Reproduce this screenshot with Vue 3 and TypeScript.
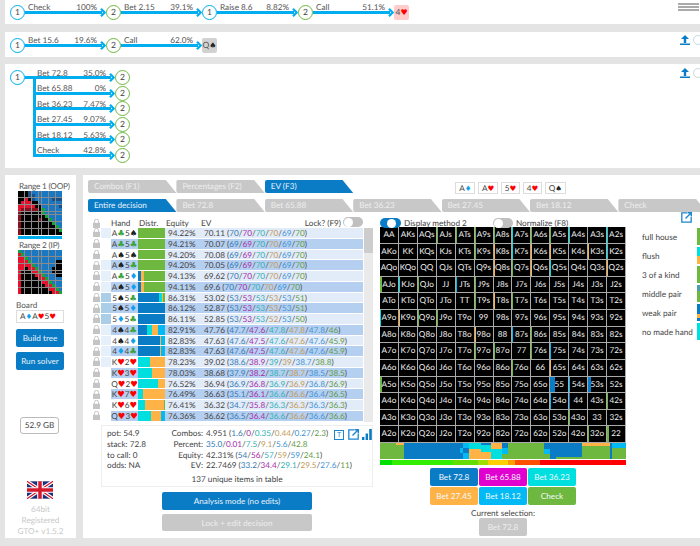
<script setup lang="ts">
interface Seg { w: number; c: string }

const D = "#0a7cc5"
const C = "#00dfe0"
const O = "#ffb347"
const G = "#6fb83f"
const L = "#00b9f5"
const M = "#e000d0"

const ranks = "AKQJT98765432".split("")

const parseCards = (str: string) => {
	const out: { r: string; s: string; k: string }[] = []
	const glyphs: Record<string, string> = { c: "♣", s: "♠", d: "♦", h: "♥" }
	for (let i = 0; i < str.length; i += 2) {
		out.push({ r: str[i], s: glyphs[str[i + 1]], k: str[i + 1] })
	}
	return out
}

const line1 = [
	{ label: "Check", pct: "100%", node: 1 },
	{ label: "Bet 2.15", pct: "39.1%", node: 2 },
	{ label: "Raise 8.6", pct: "8.82%", node: 1 },
	{ label: "Call", pct: "51.1%", node: 2 },
]
const line2 = [
	{ label: "Bet 15.6", pct: "19.6%", node: 1 },
	{ label: "Call", pct: "62.0%", node: 2 },
]
const branches = [
	{ label: "Bet 72.8", pct: "35.0%" },
	{ label: "Bet 65.88", pct: "0%" },
	{ label: "Bet 36.23", pct: "7.47%" },
	{ label: "Bet 27.45", pct: "9.07%" },
	{ label: "Bet 18.12", pct: "5.63%" },
	{ label: "Check", pct: "42.8%" },
]

const paint: Record<string, string> = { k: "#000", b: "#1a78c2", n: "#1c4f86", r: "#e8112d", d: "#8a1020", g: "#12a538" }
const range1 = [
	"kkknbbbbbbbbb",
	"kkknnbbbbbbbb",
	"kkrknbbbbbnnn",
	"krrrkkbbbbbbb",
	"rrrrrkkbbbbbn",
	"rdddddkgbbbbb",
	"dkkkkkkgbbbbb",
	"dkkkkkkkgbbbb",
	"dkkkkkdkkgbbb",
	"dkkkkkkkkkgbb",
	"dkkkkkkkkkkgb",
	"dkkkkkkkkkkkg",
	"dkkkkkkkkkkkk",
].map((r) => r.split("").map((c) => paint[c]))
const range2 = [
	"gbbbbbbbbbbbb",
	"rgbbbbbbbbbbb",
	"rrgbbbbbbbbbb",
	"rrrgbbbbbbbkk",
	"rrrrgbbbbbbkk",
	"rrkrrgbbbbkkk",
	"rkkkrrgbbbkkk",
	"rkkkkrrgbbbkk",
	"rkkkkkrrgbbbb",
	"rkkkkkkrrgbbb",
	"rkkkkkkkrrgbb",
	"rkkkkkkkkrrgb",
	"rkkkkkkkkkrrg",
].map((r) => r.split("").map((c) => paint[c]))

const rows = [
	{ hand: "Ac5s", w: 1, eq: "94.22%", ev: "70.11", vals: "70/70/70/70/69/70", dist: [{ w: 100, c: G }] },
	{ hand: "Ac5c", w: 0, eq: "94.21%", ev: "70.07", vals: "69/69/70/70/69/70", dist: [{ w: 100, c: G }] },
	{ hand: "As5s", w: 0, eq: "94.20%", ev: "70.08", vals: "69/69/70/70/69/70", dist: [{ w: 100, c: G }] },
	{ hand: "As5c", w: 1, eq: "94.20%", ev: "70.05", vals: "69/69/70/70/69/70", dist: [{ w: 100, c: G }] },
	{ hand: "Ac5d", w: 1, eq: "94.13%", ev: "69.62", vals: "70/70/70/70/69/70", dist: [{ w: 10, c: D }, { w: 14, c: O }, { w: 76, c: G }] },
	{ hand: "As5d", w: 1, eq: "94.11%", ev: "69.6", vals: "70/70/70/70/69/70", dist: [{ w: 10, c: D }, { w: 14, c: O }, { w: 76, c: G }] },
	{ hand: "5s5c", w: 2, eq: "86.31%", ev: "53.02", vals: "53/53/53/53/53/51", dist: [{ w: 79, c: D }, { w: 10, c: C }, { w: 5, c: O }, { w: 6, c: G }] },
	{ hand: "5s5d", w: 2, eq: "86.12%", ev: "52.87", vals: "53/53/53/53/53/51", dist: [{ w: 100, c: D }] },
	{ hand: "5d5c", w: 2, eq: "86.11%", ev: "52.85", vals: "53/53/53/52/53/50", dist: [{ w: 100, c: D }] },
	{ hand: "4s4c", w: 1, eq: "82.91%", ev: "47.76", vals: "47.7/47.6/47.8/47.8/47.8/46", dist: [{ w: 33, c: D }, { w: 20, c: C }, { w: 20, c: O }, { w: 27, c: L }] },
	{ hand: "4s4d", w: 1, eq: "82.83%", ev: "47.63", vals: "47.6/47.5/47.6/47.6/47.6/45.9", dist: [{ w: 82, c: D }, { w: 4, c: O }, { w: 14, c: L }] },
	{ hand: "4d4c", w: 1, eq: "82.83%", ev: "47.63", vals: "47.6/47.5/47.6/47.6/47.6/45.9", dist: [{ w: 82, c: D }, { w: 4, c: O }, { w: 14, c: L }] },
	{ hand: "Kh2h", w: 1, eq: "78.23%", ev: "39.02", vals: "38.6/38.9/39/39/38.7/38.8", dist: [{ w: 45, c: C }, { w: 55, c: O }] },
	{ hand: "Kh3h", w: 0, eq: "78.03%", ev: "38.68", vals: "37.9/38.2/38.7/38.7/38.5/38.5", dist: [{ w: 50, c: C }, { w: 50, c: O }] },
	{ hand: "Qh2h", w: 0, eq: "76.52%", ev: "36.94", vals: "36.9/36.8/36.9/36.9/36.8/36.9", dist: [{ w: 73, c: C }, { w: 27, c: O }] },
	{ hand: "Kh7h", w: 0, eq: "76.49%", ev: "36.63", vals: "35.1/36.1/36.6/36.6/36.4/36.5", dist: [{ w: 20, c: C }, { w: 80, c: O }] },
	{ hand: "Kh6h", w: 0, eq: "76.41%", ev: "36.32", vals: "34.7/35.8/36.3/36.3/36.3/36.3", dist: [{ w: 25, c: C }, { w: 70, c: O }, { w: 5, c: G }] },
	{ hand: "Qh3h", w: 0, eq: "76.36%", ev: "36.62", vals: "36.5/36.4/36.6/36.6/36.6/36.6", dist: [{ w: 47, c: C }, { w: 40, c: O }, { w: 13, c: L }] },
] as { hand: string; w: number; eq: string; ev: string; vals: string; dist: Seg[] }[]

const stats = [
	{ left: "pot: 54.9", label: "Combos:", lead: "4.951 (", vals: "1.6/0/0.35/0.44/0.27/2.3", tail: ")" },
	{ left: "stack: 72.8", label: "Percent:", lead: "", vals: "35.0/0.01/7.5/9.1/5.6/42.8", tail: "" },
	{ left: "to call: 0", label: "Equity:", lead: "42.31% (", vals: "54/56/57/59/59/24.1", tail: ")" },
	{ left: "odds: NA", label: "EV:", lead: "22.7469 (", vals: "33.2/34.4/29.1/29.5/27.6/11", tail: ")" },
]

const marks: Record<string, [string, number]> = {
	AJs: [G, 1], ATs: [G, 1], A9s: [G, 1], A8s: [G, 1], A7s: [C, 1], A6s: [G, 1], A5s: [G, 1], A4s: [C, 1], A2s: [C, 1],
	K9s: [G, 1], K8s: [O, 1], K7s: [C, 1], K6s: [O, 1], K5s: [O, 1], K3s: [O, 1], K2s: [C, 1],
	Q8s: [O, 1], Q7s: [G, 1], Q6s: [O, 1], Q5s: [C, 1], Q2s: [O, 1],
	AJo: [G, 2], KJo: [C, 1], QJo: [G, 1], JTs: [L, 1], J9s: [G, 1], T9s: [G, 1], T8s: [O, 1], T7s: [G, 1], A9o: [C, 1], K9o: [O, 1], Q9o: [G, 1], J9o: [G, 1],
	"98o": [O, 1], "87s": [L, 1], "86s": [G, 1], "97o": [G, 1], "87o": [G, 1], "76o": [G, 1], "76s": [G, 1], "75s": [L, 1], "65s": [O, 1],
	A5o: [G, 2], "55": [D, 5], "54s": [L, 1], "53s": [D, 3], "54o": [L, 1], "44": [D, 1], "42s": [G, 1], "43o": [G, 1], "32o": [G, 1], "22": [G, 2],
}

const grid = ranks.flatMap((a, r) =>
	ranks.map((b, c) => {
		const name = r === c ? a + a : c > r ? a + b + "s" : b + a + "o"
		const mark = marks[name]
		return { name, markColor: mark ? mark[0] : "", markWidth: mark ? mark[1] : 0 }
	}),
)

// share of the strip: width then stacked colours
const strip: { w: number; stack: Seg[] }[] = [
	{ w: 8, stack: [{ w: 100, c: G }] },
	{ w: 4, stack: [{ w: 12, c: O }, { w: 88, c: G }] },
	{ w: 20, stack: [{ w: 100, c: D }] },
	{ w: 8, stack: [{ w: 100, c: D }] },
	{ w: 1.5, stack: [{ w: 30, c: D }, { w: 30, c: L }, { w: 40, c: D }] },
	{ w: 3, stack: [{ w: 30, c: L }, { w: 30, c: D }, { w: 40, c: L }] },
	{ w: 6, stack: [{ w: 35, c: C }, { w: 65, c: O }] },
	{ w: 5, stack: [{ w: 10, c: D }, { w: 45, c: C }, { w: 45, c: O }] },
	{ w: 5, stack: [{ w: 40, c: O }, { w: 60, c: C }] },
	{ w: 3, stack: [{ w: 30, c: D }, { w: 40, c: L }, { w: 30, c: G }] },
	{ w: 18, stack: [{ w: 100, c: G }] },
	{ w: 3, stack: [{ w: 40, c: D }, { w: 30, c: L }, { w: 30, c: G }] },
	{ w: 3, stack: [{ w: 100, c: D }] },
	{ w: 13, stack: [{ w: 85, c: D }, { w: 15, c: G }] },
	{ w: 14, stack: [{ w: 20, c: O }, { w: 80, c: G }] },
	{ w: 1, stack: [{ w: 100, c: D }] },
	{ w: 7, stack: [{ w: 30, c: L }, { w: 70, c: G }] },
]

const actions = [
	{ label: "Bet 72.8", c: D },
	{ label: "Bet 65.88", c: M },
	{ label: "Bet 36.23", c: C },
	{ label: "Bet 27.45", c: O },
	{ label: "Bet 18.12", c: L },
	{ label: "Check", c: G },
]

const legend = [
	{ name: "full house", bar: [{ w: 100, c: G }] },
	{ name: "flush", bar: [{ w: 50, c: C }, { w: 50, c: O }] },
	{ name: "3 of a kind", bar: [{ w: 100, c: G }] },
	{ name: "middle pair", bar: [{ w: 35, c: "#4a9fb0" }, { w: 65, c: G }] },
	{ name: "weak pair", bar: [{ w: 60, c: D }, { w: 20, c: O }, { w: 20, c: D }] },
	{ name: "no made hand", bar: [{ w: 100, c: C }] },
]

const topTabs = ["Combos (F1)", "Percentages (F2)", "EV (F3)"]
const subTabs = ["Entire decision", "Bet 72.8", "Bet 65.88", "Bet 36.23", "Bet 27.45", "Bet 18.12", "Check"]
</script>

<template>
	<div class="page">
		<div class="panel p1">
			<div class="tree-line">
				<template v-for="e in line1" :key="e.label">
					<span class="node" :class="'n' + e.node">{{ e.node }}</span>
					<div class="edge">
						<div class="edge-text"><span>{{ e.label }}</span><span>{{ e.pct }}</span></div>
						<div class="arrow"><i></i><svg width="6" height="9" viewBox="0 0 6 9"><path d="M1 .8 L4.6 4.5 L1 8.2" fill="none" stroke="#00aeef" stroke-width="2.2" /></svg></div>
					</div>
				</template>
				<span class="card-node red"><b>4</b><em class="suit-h">♥</em></span>
			</div>
			<div class="stripes"><i></i><i></i><i></i></div>
		</div>

		<div class="panel p2">
			<div class="tree-line">
				<template v-for="e in line2" :key="e.label">
					<span class="node" :class="'n' + e.node">{{ e.node }}</span>
					<div class="edge">
						<div class="edge-text"><span>{{ e.label }}</span><span>{{ e.pct }}</span></div>
						<div class="arrow"><i></i><svg width="6" height="9" viewBox="0 0 6 9"><path d="M1 .8 L4.6 4.5 L1 8.2" fill="none" stroke="#00aeef" stroke-width="2.2" /></svg></div>
					</div>
				</template>
				<span class="card-node grey"><b>Q</b><em class="suit-s">♠</em></span>
			</div>
			<div class="tools">
				<svg width="10" height="10" viewBox="0 0 10 10"><path d="M5 0 L9 4 H6.2 V8 H3.8 V4 H1 Z M0 8.6 H10 V10 H0 Z" fill="#0a7cc5" /></svg>
				<span class="ring"></span>
			</div>
		</div>

		<div class="panel p3">
			<div class="tree-split">
				<span class="node n1">1</span>
				<span class="stem"></span>
				<div class="branches">
					<span class="trunk"></span>
					<div v-for="b in branches" :key="b.label" class="branch">
						<div class="edge long">
							<div class="edge-text"><span>{{ b.label }}</span><span>{{ b.pct }}</span></div>
							<div class="arrow"><i></i><svg width="6" height="9" viewBox="0 0 6 9"><path d="M1 .8 L4.6 4.5 L1 8.2" fill="none" stroke="#00aeef" stroke-width="2.2" /></svg></div>
						</div>
						<span class="node n2">2</span>
					</div>
				</div>
			</div>
			<div class="tools">
				<svg width="10" height="10" viewBox="0 0 10 10"><path d="M5 0 L9 4 H6.2 V8 H3.8 V4 H1 Z M0 8.6 H10 V10 H0 Z" fill="#0a7cc5" /></svg>
				<span class="ring"></span>
			</div>
		</div>

		<div class="lower">
			<aside class="side">
				<div class="range-title">Range 1 (OOP)</div>
				<div class="range">
					<template v-for="(r, i) in range1" :key="i"><i v-for="(c, j) in r" :key="j" :style="{ background: c }"></i></template>
				</div>
				<div class="range-active"></div>
				<div class="range-title second">Range 2 (IP)</div>
				<div class="range">
					<template v-for="(r, i) in range2" :key="i"><i v-for="(c, j) in r" :key="j" :style="{ background: c }"></i></template>
				</div>
				<div class="board-title">Board</div>
				<div class="board-input">
					<template v-for="(c, i) in parseCards('AdAh5h')" :key="i">{{ c.r }}<em :class="'suit-' + c.k">{{ c.s }}</em></template>
				</div>
				<button class="btn side-btn first">Build tree</button>
				<button class="btn side-btn">Run solver</button>
				<div class="memory">52.9 GB</div>
				<svg class="flag" width="26" height="18" viewBox="0 0 60 40">
					<rect width="60" height="40" fill="#1b2f7a" />
					<path d="M0 0 L60 40 M60 0 L0 40" stroke="#fff" stroke-width="8" />
					<path d="M0 0 L60 40 M60 0 L0 40" stroke="#d3182b" stroke-width="3" />
					<path d="M30 0 V40 M0 20 H60" stroke="#fff" stroke-width="13" />
					<path d="M30 0 V40 M0 20 H60" stroke="#d3182b" stroke-width="8" />
				</svg>
				<div class="version">64bit<br />Registered<br />GTO+ v1.5.2</div>
			</aside>

			<main class="main">
				<div class="tabs top">
					<span v-for="(t, i) in topTabs" :key="t" class="tab" :class="{ on: i === 2 }">{{ t }}</span>
					<div class="board-cards">
						<span v-for="c in ['Ad', 'Ah', '5h', '4h', 'Qs']" :key="c" class="mini">{{ c[0] }}<em :class="'suit-' + c[1]">{{ parseCards(c)[0].s }}</em></span>
					</div>
				</div>
				<div class="tabs sub">
					<span v-for="(t, i) in subTabs" :key="t" class="tab" :class="{ on: i === 0 }">{{ t }}</span>
				</div>

				<div class="body">
					<section class="left">
						<div class="thead">
							<span class="c-lock"><svg width="7" height="9" viewBox="0 0 7 9"><path d="M1.4 4 V2.4 A2.1 2.1 0 0 1 5.6 2.4 V4" fill="none" stroke="#c4c4c4" stroke-width="1" /><rect y="3.8" width="7" height="5.2" fill="#c4c4c4" /></svg></span>
							<span class="c-weight"></span>
							<span class="c-hand">Hand</span>
							<span class="c-dist">Distr.</span>
							<span class="c-eq">Equity</span>
							<span class="c-ev">EV</span>
							<span class="lock-q">Lock? (F9)</span>
							<span class="switch off"><i></i></span>
						</div>
						<div class="table">
							<div class="tbody">
								<div v-for="(r, idx) in rows" :key="r.hand" class="row" :class="{ alt: idx % 2 === 1 }">
									<span class="c-lock"><svg width="7" height="9" viewBox="0 0 7 9"><path d="M1.4 4 V2.4 A2.1 2.1 0 0 1 5.6 2.4 V4" fill="none" stroke="#c4c4c4" stroke-width="1" /><rect y="3.8" width="7" height="5.2" fill="#c4c4c4" /></svg></span>
									<span class="c-weight" :class="'w' + r.w"></span>
									<span class="c-hand"><template v-for="(c, i) in parseCards(r.hand)" :key="i">{{ c.r }}<em :class="'suit-' + c.k">{{ c.s }}</em></template></span>
									<span class="c-dist"><i v-for="(s, i) in r.dist" :key="i" :style="{ width: s.w + '%', background: s.c }"></i></span>
									<span class="c-eq">{{ r.eq }}</span>
									<span class="c-ev">{{ r.ev }} (<template v-for="(v, i) in r.vals.split('/')" :key="i"><template v-if="i">/</template><span :class="'v' + i">{{ v }}</span></template>)</span>
								</div>
							</div>
							<div class="scroll"><i></i></div>
						</div>

						<div class="stats">
							<div class="stat-icons">
								<span class="icon-t">T</span>
								<svg width="11" height="11" viewBox="0 0 11 11"><path d="M6 .8 H.8 V10.2 H10.2 V5" fill="none" stroke="#1a86d0" stroke-width="1.3" /><path d="M4.5 6.5 L10 1 M6.5 .7 H10.3 V4.5" fill="none" stroke="#1a86d0" stroke-width="1.4" /></svg>
								<svg width="10" height="11" viewBox="0 0 10 11"><path d="M0 8 H2.4 V11 H0 Z M3.6 4.5 H6 V11 H3.6 Z M7.2 0 H9.8 V11 H7.2 Z" fill="#0a7cc5" /></svg>
							</div>
							<div class="stat-grid">
								<template v-for="s in stats" :key="s.label">
									<span>{{ s.left }}</span>
									<span class="stat-label">{{ s.label }}</span>
									<span>{{ s.lead }}<template v-for="(v, i) in s.vals.split('/')" :key="i"><template v-if="i">/</template><span :class="'v' + i">{{ v }}</span></template>{{ s.tail }}</span>
								</template>
							</div>
							<div class="unique">137 unique items in table</div>
						</div>

						<button class="btn wide">Analysis mode (no edits)</button>
						<button class="btn wide off">Lock + edit decision</button>
					</section>

					<section class="right">
						<div class="toggles">
							<span class="switch on"><i></i></span>
							<span class="toggle-text first">Display method 2</span>
							<span class="switch off"><i></i></span>
							<span class="toggle-text">Normalize (F8)</span>
							<svg class="popout" width="11" height="11" viewBox="0 0 11 11"><path d="M6 .8 H.8 V10.2 H10.2 V5" fill="none" stroke="#1a86d0" stroke-width="1.3" /><path d="M4.5 6.5 L10 1 M6.5 .7 H10.3 V4.5" fill="none" stroke="#1a86d0" stroke-width="1.4" /></svg>
						</div>
						<div class="grid-wrap">
							<div class="matrix-col">
								<div class="matrix">
									<div v-for="g in grid" :key="g.name" class="cell">
										<i v-if="g.markWidth" :style="{ width: g.markWidth + 'px', background: g.markColor }"></i>
										<span>{{ g.name }}</span>
									</div>
								</div>
								<div class="strip">
									<div v-for="(s, i) in strip" :key="i" class="strip-col" :style="{ flexGrow: s.w }">
										<i v-for="(p, j) in s.stack" :key="j" :style="{ height: p.w + '%', background: p.c }"></i>
									</div>
								</div>
								<div class="heat"></div>
								<div class="action-grid">
									<button v-for="a in actions" :key="a.label" class="btn action" :style="{ background: a.c }">{{ a.label }}</button>
								</div>
								<div class="current">Current selection:</div>
								<button class="btn action off selected">Bet 72.8</button>
							</div>
							<ul class="legend">
								<li v-for="l in legend" :key="l.name">
									<span>{{ l.name }}</span>
									<div class="legend-bar"><i v-for="(p, j) in l.bar" :key="j" :style="{ height: p.w + '%', background: p.c }"></i></div>
								</li>
							</ul>
						</div>
					</section>
				</div>
			</main>
		</div>
	</div>
</template>

<style>
html,
body {
	margin: 0;
	background: #e4e4e4;
}
</style>

<style scoped>
.page {
	width: 700px;
	height: 546px;
	overflow: hidden;
	background: #e4e4e4;
	padding-left: 5px;
	box-sizing: border-box;
	font-family: Lato, "DejaVu Sans", sans-serif;
	font-size: 8.2px;
	line-height: 10px;
	color: #555;
	text-rendering: geometricPrecision;
}

em {
	font-style: normal;
	font-family: "DejaVu Sans", sans-serif;
	font-size: 8.5px;
}
.suit-c { color: #3aa33a; }
.suit-s { color: #222; }
.suit-d { color: #12a0ee; }
.suit-h { color: #f00; }

/* hand tree */
.panel {
	background: #fff;
	width: 695px;
	display: flex;
	justify-content: space-between;
	align-items: flex-start;
	overflow: hidden;
	box-sizing: border-box;
	padding-left: 5px;
}
.p1 { height: 24px; padding-top: 4.5px; margin-bottom: 8px; }
.p2 { height: 25px; padding-top: 5.5px; margin-bottom: 7px; }
.p3 { height: 104px; padding-top: 6.25px; margin-bottom: 7px; }

.tree-line {
	display: flex;
	align-items: flex-start;
}
.node {
	flex: none;
	width: 15px;
	height: 15px;
	box-sizing: border-box;
	border: 1.6px solid #00aeef;
	border-radius: 50%;
	background: #fff;
	text-align: center;
	line-height: 12px;
	color: #444;
	font-size: 8.5px;
}
.node.n2 { border-color: #6fb83f; }
.edge {
	width: 81px;
	margin-top: -2.5px;
	flex: none;
}
.edge.long { width: 82px; }
.edge-text {
	display: flex;
	justify-content: space-between;
	padding: 0 9px 0 3px;
	height: 10px;
	white-space: nowrap;
}
.edge.long .edge-text { padding-left: 4px; }
.arrow {
	display: flex;
	align-items: center;
	height: 9px;
	margin-top: -4.5px;
}
.arrow i {
	flex: 1;
	height: 3px;
	background: #00aeef;
	margin-right: -2px;
}
.arrow svg { flex: none; }
.card-node {
	flex: none;
	width: 15px;
	height: 15px;
	border-radius: 2px;
	text-align: center;
	line-height: 15px;
	font-size: 8.5px;
	white-space: nowrap;
	overflow: hidden;
}
.card-node b { font-weight: 400; }
.card-node em { font-size: 8px; }
.card-node.red { background: #ffcccc; }
.card-node.grey { background: #d2d2d2; }

.stripes {
	width: 21px;
	display: flex;
	flex-direction: column;
	gap: 1px;
	margin: -1.5px 1px 0 0;
}
.stripes i {
	height: 2px;
	background: #aaa;
}
.tools {
	display: flex;
	align-items: center;
	gap: 3px;
	width: 20px;
	flex: none;
	margin: -2.5px 0 0 0;
}
.tools svg { flex: none; }
.ring {
	flex: none;
	width: 10px;
	height: 10px;
	box-sizing: border-box;
	border: 1px solid #c8d8e0;
	border-radius: 50%;
}

.tree-split {
	display: flex;
	align-items: flex-start;
}
.stem {
	flex: none;
	width: 8px;
	height: 3px;
	margin-top: 6px;
	background: #00aeef;
}
.branches {
	position: relative;
}
.trunk {
	position: absolute;
	left: 0;
	top: 6px;
	bottom: 6.5px;
	width: 3px;
	background: #00aeef;
}
.branch {
	display: flex;
	align-items: flex-start;
	height: 15.5px;
}

/* lower area */
.lower {
	display: flex;
	gap: 7px;
	height: 363px;
}
.side {
	flex: none;
	width: 71px;
	background: #fff;
	box-sizing: border-box;
	padding: 6px 0 0 11px;
	display: flex;
	flex-direction: column;
	white-space: nowrap;
}
.range-title {
	padding-left: 3px;
	height: 10px;
	letter-spacing: -.2px;
}
.range-title.second { margin-top: 1px; }
.range {
	margin-left: 2px;
	width: 44px;
	height: 44px;
	flex: none;
	display: grid;
	grid-template-columns: repeat(13, 1fr);
	grid-template-rows: repeat(13, 1fr);
	gap: .55px;
	background: #8a8a8a;
}
.range-active {
	flex: none;
	width: 44px;
	height: 3px;
	margin: 1px 0 0 2px;
	background: #00aeef;
}
.board-title {
	margin-top: 6px;
	height: 10px;
}
.board-input {
	width: 48px;
	height: 13px;
	box-sizing: border-box;
	border: 1px solid #ddd;
	padding-left: 3px;
	line-height: 11px;
	color: #444;
}
.board-input em { font-size: 7.5px; }
.btn {
	font: inherit;
	font-size: 8.2px;
	border: 0;
	border-radius: 2px;
	padding: 0;
	background: #0a7cc5;
	color: #e8f2fa;
	display: block;
	white-space: nowrap;
}
.btn.off {
	background: #c8c8c8;
	color: #eee;
}
.side-btn {
	flex: none;
	width: 48px;
	height: 18px;
	margin-top: 5px;
}
.side-btn.first { margin-top: 6px; }
.memory {
	margin: 47px 0 0 4px;
	width: 39px;
	height: 17px;
	box-sizing: border-box;
	border: 1px solid #bbb;
	border-radius: 3px;
	text-align: center;
	line-height: 15px;
	color: #444;
}
.flag {
	flex: none;
	margin: 47px 0 0 11px;
}
.version {
	margin: 5px 0 0 -11px;
	width: 71px;
	text-align: center;
	color: #c8c8c8;
	line-height: 11px;
}

/* main */
.main {
	flex: 1;
	min-width: 0;
	background: #fff;
	box-sizing: border-box;
	padding: 5px 0 0 5px;
	overflow: hidden;
}
.tabs {
	display: flex;
	height: 13px;
	white-space: nowrap;
	color: #eee;
}
.tabs.sub { margin-top: 6px; }
.tab {
	flex: none;
	width: 88.4px;
	box-sizing: border-box;
	background: #c8c8c8;
	padding-left: 6px;
	line-height: 13px;
	clip-path: polygon(0 0, 88% 0, 100% 100%, 0 100%);
	border-radius: 2px 0 0 2px;
}
.tab.on {
	background: #0a7cc5;
	color: #e8f2fa;
}
.board-cards {
	display: flex;
	gap: 2.5px;
	margin: 3px 0 0 102px;
	height: 10px;
}
.mini {
	padding: 0 3px;
	border: 1px solid #ddd;
	text-align: center;
	line-height: 10px;
	height: 10px;
	color: #444;
	margin-top: -1px;
}
.mini em { font-size: 7.5px; }

.body {
	display: flex;
	gap: 7px;
}
.left {
	flex: none;
	width: 285px;
}
.thead {
	display: flex;
	align-items: flex-end;
	height: 16px;
	color: #444;
}
.c-lock {
	flex: none;
	width: 13px;
	display: flex;
	padding-left: 5px;
	box-sizing: border-box;
}
.c-weight {
	flex: none;
	width: 10px;
	height: 100%;
}
.row .c-weight.w1 { background: #e6f0fa; }
.row .c-weight.w2 { background: #aacde8; }
.c-hand {
	flex: none;
	width: 27px;
	text-align: center;
	white-space: nowrap;
}
.thead .c-hand { text-align: left; }
.c-dist {
	flex: none;
	width: 27px;
	display: flex;
	height: 100%;
}
.thead .c-dist { align-items: flex-end; padding-left: 1px; box-sizing: border-box; }
.c-dist i { display: block; height: 100%; }
.c-eq {
	flex: none;
	width: 35px;
	padding-left: 3px;
	box-sizing: border-box;
}
.thead .c-eq { padding-left: 1px; }
.c-ev {
	flex: none;
	width: 163px;
	padding-left: 4px;
	box-sizing: border-box;
	white-space: nowrap;
}
.thead .c-ev { width: auto; padding-left: 1px; }
.lock-q { margin-left: auto; margin-right: 2px; }
.thead .switch { margin: 0 10px 1px 0; }

.switch {
	flex: none;
	position: relative;
	display: block;
	width: 20px;
	height: 10px;
	border-radius: 5px;
	background: #c0c0c0;
}
.switch i {
	position: absolute;
	top: .5px;
	left: .5px;
	width: 9px;
	height: 9px;
	border-radius: 50%;
	background: #fff;
}
.switch.on { background: #0a7cc5; width: 21px; }
.switch.on i { left: 7px; }

.table {
	display: flex;
	height: 194px;
	overflow: hidden;
}
.tbody { flex: none; width: 275px; }
.row {
	display: flex;
	align-items: center;
	height: 10.76px;
	box-sizing: border-box;
	border-bottom: .75px solid #fff;
	color: #444;
}
.row .c-hand { height: 100%; background: #fff; }
.row .c-eq,
.row .c-ev {
	height: 100%;
	background: #e2ebf8;
}
.row.alt .c-hand,
.row.alt .c-eq,
.row.alt .c-ev {
	background: #b5cff0;
}
.row .c-hand em { font-size: 8.5px; }
.v0 { color: #2f79b5; }
.v1 { color: #a52aa8; }
.v2 { color: #2fb0b5; }
.v3 { color: #c29a55; }
.v4 { color: #3a94d4; }
.v5 { color: #5f9a45; }
.scroll {
	flex: none;
	width: 9px;
	margin-left: 1px;
	background: #eaeaea;
}
.scroll i {
	display: block;
	height: 25px;
	background: #cdcdcd;
}

.stats {
	margin: 3px 0 0 13px;
	width: 272px;
	height: 62px;
	box-sizing: border-box;
	border: 1px solid #eee;
	padding: 2px 0 0 5px;
	position: relative;
	color: #444;
}
.stat-icons {
	position: absolute;
	right: 0;
	top: 3px;
	display: flex;
	align-items: center;
	gap: 3px;
}
.icon-t {
	width: 10px;
	height: 10px;
	box-sizing: border-box;
	border: 1px solid #1a86d0;
	color: #1a86d0;
	font-size: 7px;
	line-height: 8px;
	text-align: center;
	margin-right: 1px;
}
.stat-grid {
	display: grid;
	grid-template-columns: 58px 35px 1fr;
	column-gap: 3px;
	grid-auto-rows: 10.8px;
	white-space: nowrap;
}
.stat-label { text-align: right; }
.unique {
	margin: 3px 0 0 -5px;
	text-align: center;
}
.btn.wide {
	width: 150px;
	height: 18px;
	margin: 5px 0 0 74px;
}
.btn.wide.off { margin-top: 4px; height: 17px; }

.right {
	flex: 1;
	min-width: 0;
}
.toggles {
	display: flex;
	align-items: flex-end;
	height: 16px;
	margin-bottom: -1px;
	color: #444;
	position: relative;
}
.toggle-text { margin-left: 3px; }
.toggle-text.first { width: 89px; }
.popout {
	position: absolute;
	left: 301px;
	top: 0;
}
.grid-wrap {
	display: flex;
}
.matrix-col {
	flex: none;
	width: 246px;
	display: flex;
	flex-direction: column;
}
.matrix {
	display: grid;
	grid-template-columns: repeat(13, 1fr);
	grid-template-rows: repeat(13, 1fr);
	width: 246px;
	height: 216px;
	background: #000;
}
.cell {
	position: relative;
	box-sizing: border-box;
	border-right: 1px solid #aaa;
	border-bottom: 1px solid #aaa;
	color: #f0f0f0;
	text-align: center;
	line-height: 15.5px;
	font-size: 8.2px;
	white-space: nowrap;
	overflow: hidden;
}
.cell i {
	position: absolute;
	left: 0;
	top: 0;
	bottom: 0;
}
.cell span { position: relative; }
.strip {
	display: flex;
	height: 16px;
}
.strip-col {
	flex: 1 1 0;
	min-width: 0;
}
.strip-col i { display: block; }
.heat {
	height: 5px;
	margin-top: 1px;
	background: linear-gradient(90deg, #00e000 0 5%, #33ee00 5% 29.5%, #66dd00 29.5% 40%, #a0e000 40% 44%, #ffd000 44% 52%, #ffa000 52% 55%, #ff5000 55% 65%, #f00 65% 100%);
}
.action-grid {
	display: grid;
	grid-template-columns: repeat(3, 48px);
	gap: 1px;
	margin: 3px 0 0 50px;
}
.btn.action {
	height: 18px;
	width: 48px;
	color: #f2f8fc;
}
.current {
	margin-top: 3px;
	text-align: center;
	color: #444;
}
.btn.action.selected {
	margin: 0 0 0 99px;
	color: #eee;
}
.legend {
	list-style: none;
	margin: 0 0 0 16px;
	padding: 0;
	flex: 1;
	min-width: 0;
}
.legend li {
	display: flex;
	justify-content: space-between;
	align-items: center;
	height: 19px;
	color: #444;
	white-space: nowrap;
}
.legend-bar {
	width: 3px;
	height: 17px;
}
.legend-bar i { display: block; }
</style>
